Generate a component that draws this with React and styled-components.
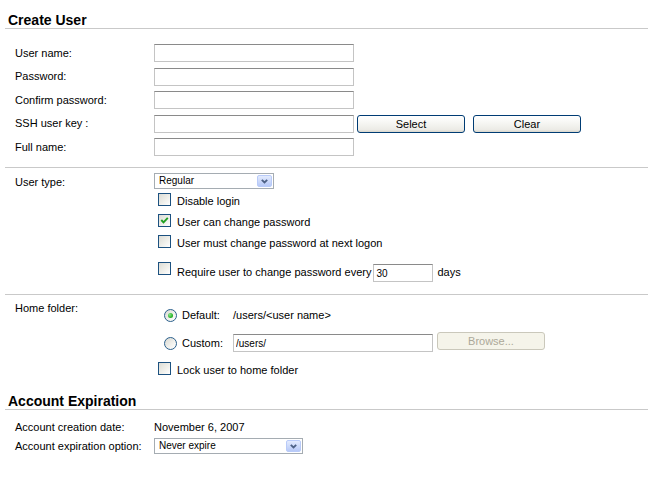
import React from "react";
import styled, { createGlobalStyle } from "styled-components";

const GlobalStyle = createGlobalStyle`
  html, body { margin: 0; padding: 0; background: #fff; }
  body {
    font-family: "Liberation Sans", Arial, sans-serif;
    font-size: 11px;
    color: #000;
  }
  * { box-sizing: border-box; }
`;

const Page = styled.div`
  width: 648px;
  height: 493px;
  padding: 12px 0 0 5px;
  overflow: hidden;
`;

const Title = styled.h2`
  margin: ${(p) => p.$top || 0}px 0 0 0;
  padding: 0 0 0 3px;
  font-size: 14px;
  font-weight: bold;
  line-height: 16px;
  border-bottom: 1px solid #c9c9c9;
`;

const Section = styled.div`
  display: grid;
  grid-template-columns: 139px 1fr;
  row-gap: ${(p) => p.$gap || 0}px;
  align-items: center;
  padding: ${(p) => p.$pt}px 0 ${(p) => p.$pb}px 10px;
  border-bottom: ${(p) => (p.$divider ? "1px solid #c9c9c9" : "none")};
`;

const Label = styled.div`
  line-height: 13px;
  align-self: ${(p) => p.$align || "center"};
  padding-top: ${(p) => p.$pt || 0}px;
  white-space: nowrap;
`;

const Value = styled.div`
  line-height: 16px;
`;

const Column = styled.div`
  display: flex;
  flex-direction: column;
  align-items: flex-start;
  padding-top: ${(p) => p.$pt || 0}px;
`;

const Inline = styled.div`
  display: flex;
  align-items: center;
`;

const TextInput = styled.input`
  width: ${(p) => p.$w || 200}px;
  height: 18px;
  margin: ${(p) => p.$m || "0"};
  padding: 0 2px;
  border: 1px solid #c4c4c4;
  border-top-color: #8a8a8a;
  background: #fff;
  font: 10px "Liberation Sans", Arial, sans-serif;
  color: #000;
  outline: none;
  flex: none;
`;

const Button = styled.button`
  width: 108px;
  height: 18px;
  margin: 0 0 0 ${(p) => p.$ml || 0}px;
  padding: 0;
  flex: none;
  border: 1px solid ${(p) => (p.disabled ? "#cac8bb" : "#003c74")};
  border-radius: 3px;
  background: ${(p) =>
    p.disabled
      ? "#f5f4ea"
      : "linear-gradient(#ffffff 0%, #f7f7f4 40%, #ecebe6 85%, #d8d6cc 100%)"};
  color: ${(p) => (p.disabled ? "#aca899" : "#000")};
  font: 11px "Liberation Sans", Arial, sans-serif;
  font-weight: normal;
  line-height: 16px;
  align-self: ${(p) => (p.$raised ? "flex-start" : "center")};
  margin-top: ${(p) => (p.$raised ? -2 : 0)}px;
`;

const SelectBox = styled.div`
  width: ${(p) => p.$w}px;
  height: 16px;
  margin-top: ${(p) => p.$mt || 0}px;
  display: flex;
  align-items: center;
  justify-content: space-between;
  padding: 0 1px 0 4px;
  border: 1px solid #a5acb2;
  background: #fff;
  font-size: 10px;
  line-height: 12px;
`;

const ArrowBtn = styled.span`
  width: 15px;
  height: 12px;
  display: flex;
  align-items: center;
  justify-content: center;
  border: 1px solid #b9cbf9;
  border-radius: 2px;
  background: linear-gradient(#e3ebfe, #b7c9f7);
`;

const CheckRow = styled.div`
  display: flex;
  align-items: flex-start;
  gap: 6px;
  padding-left: 4px;
  margin-top: ${(p) => p.$mt || 0}px;
  line-height: 13px;
  white-space: nowrap;
`;

const CheckText = styled.span`
  margin-top: ${(p) => p.$mt ?? 2}px;
  margin-left: ${(p) => p.$ml || 0}px;
`;

const Box = styled.span`
  width: 13px;
  height: 13px;
  flex: none;
  display: flex;
  align-items: center;
  justify-content: center;
  border: 1px solid #1c5180;
  background: linear-gradient(135deg, #dcdcd5 0%, #efefea 55%, #ffffff 100%);
`;

const RadioRow = styled.div`
  display: flex;
  align-items: center;
  padding-left: 10px;
  margin-top: ${(p) => p.$mt || 0}px;
  line-height: 13px;
`;

const RadioCircle = styled.span`
  width: 13px;
  height: 13px;
  flex: none;
  border-radius: 50%;
  display: flex;
  align-items: center;
  justify-content: center;
  border: 1px solid #2a5f8c;
  background: linear-gradient(135deg, #d8d8d1 0%, #f0f0ec 55%, #ffffff 100%);
`;

const Dot = styled.span`
  width: 5px;
  height: 5px;
  border-radius: 50%;
  background: radial-gradient(circle at 35% 35%, #8ae68a 0%, #2cb52c 60%, #1a8a1a 100%);
`;

const RadioLabel = styled.span`
  width: 51px;
  margin-left: 5px;
  flex: none;
`;

const Chevron = () => (
  <svg width="7" height="5" viewBox="0 0 7 5">
    <path d="M0.8 0.8 L3.5 3.5 L6.2 0.8" fill="none" stroke="#4d6185" strokeWidth="1.8" />
  </svg>
);

const Select = ({ w, mt, children }) => (
  <SelectBox $w={w} $mt={mt}>
    <span>{children}</span>
    <ArrowBtn>
      <Chevron />
    </ArrowBtn>
  </SelectBox>
);

const Checkbox = ({ checked }) => (
  <Box>
    {checked && (
      <svg width="9" height="9" viewBox="0 0 9 9">
        <polyline points="1.3,4 3.5,6.3 7.8,1.8" fill="none" stroke="#21a121" strokeWidth="1.9" />
      </svg>
    )}
  </Box>
);

const Radio = ({ checked }) => <RadioCircle>{checked && <Dot />}</RadioCircle>;

export default function App() {
  return (
    <>
      <GlobalStyle />
      <Page>
        <Title>Create User</Title>
        <Section $pt={15} $pb={11} $gap={5.5} $divider>
          <Label>User name:</Label>
          <TextInput />
          <Label>Password:</Label>
          <TextInput type="password" />
          <Label>Confirm password:</Label>
          <TextInput type="password" />
          <Label>SSH user key :</Label>
          <Inline>
            <TextInput />
            <Button $ml={3}>Select</Button>
            <Button $ml={8}>Clear</Button>
          </Inline>
          <Label>Full name:</Label>
          <TextInput />
        </Section>

        <Section $pt={5} $pb={12} $divider>
          <Label $align="start" $pt={3}>User type:</Label>
          <Column>
            <Select w={120}>Regular</Select>
            <CheckRow $mt={4}>
              <Checkbox />
              <CheckText>Disable login</CheckText>
            </CheckRow>
            <CheckRow $mt={6}>
              <Checkbox checked />
              <CheckText>User can change password</CheckText>
            </CheckRow>
            <CheckRow $mt={6}>
              <Checkbox />
              <CheckText>User must change password at next logon</CheckText>
            </CheckRow>
            <CheckRow $mt={12}>
              <Checkbox />
              <CheckText $mt={4}>Require user to change password every</CheckText>
              <TextInput $w={60} $m="2px 0 0 -4px" defaultValue="30" />
              <CheckText $mt={4} $ml={-2}>days</CheckText>
            </CheckRow>
          </Column>
        </Section>

        <Section $pt={7} $pb={0}>
          <Label $align="start">Home folder:</Label>
          <Column $pt={7}>
            <RadioRow>
              <Radio checked />
              <RadioLabel>Default:</RadioLabel>
              <span>/users/&lt;user name&gt;</span>
            </RadioRow>
            <RadioRow $mt={12}>
              <Radio />
              <RadioLabel>Custom:</RadioLabel>
              <TextInput defaultValue="/users/" />
              <Button $ml={4} $raised disabled>
                Browse...
              </Button>
            </RadioRow>
            <CheckRow $mt={10}>
              <Checkbox />
              <CheckText>Lock user to home folder</CheckText>
            </CheckRow>
          </Column>
        </Section>

        <Title $top={16}>Account Expiration</Title>
        <Section $pt={9} $pb={0} $gap={3}>
          <Label>Account creation date:</Label>
          <Value>November 6, 2007</Value>
          <Label>Account expiration option:</Label>
          <Select w={149}>Never expire</Select>
        </Section>
      </Page>
    </>
  );
}
